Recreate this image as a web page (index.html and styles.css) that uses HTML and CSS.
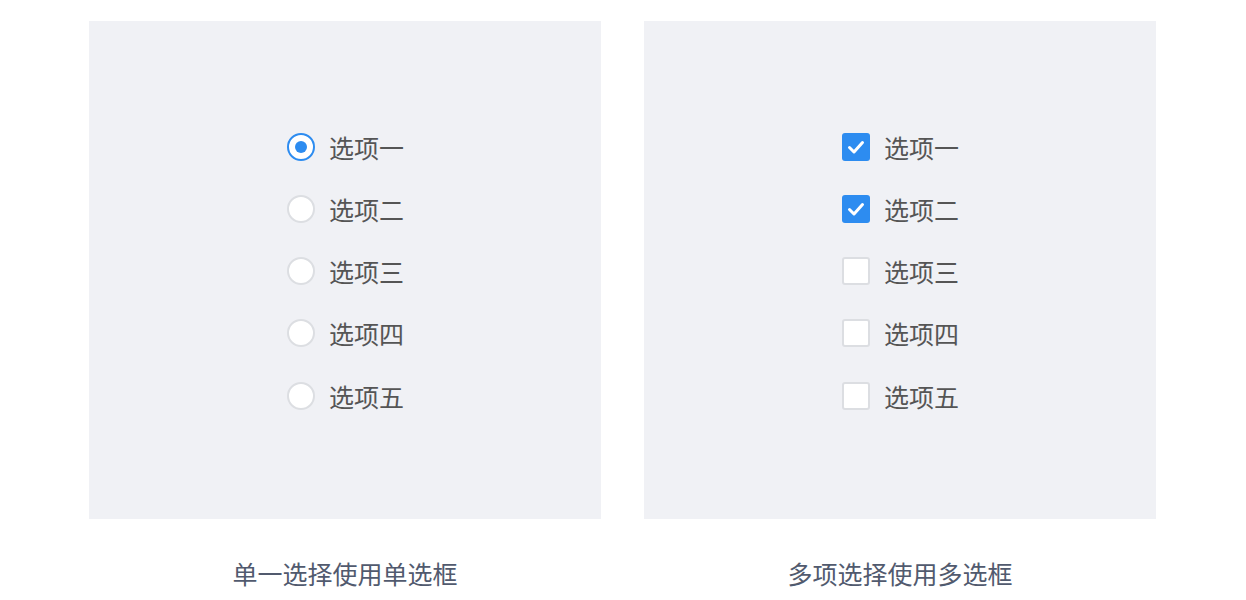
FILE: index.html
```html
<!DOCTYPE html>
<html lang="zh">
<head>
<meta charset="utf-8">
<link rel="stylesheet" href="styles.css">
</head>
<body>
<div class="page">
  <div class="col">
    <div class="panel">
      <div class="list">
        <div class="row"><span class="radio checked"></span><span class="label">选项一</span></div>
        <div class="row"><span class="radio"></span><span class="label">选项二</span></div>
        <div class="row"><span class="radio"></span><span class="label">选项三</span></div>
        <div class="row"><span class="radio"></span><span class="label">选项四</span></div>
        <div class="row"><span class="radio"></span><span class="label">选项五</span></div>
      </div>
    </div>
    <div class="caption">单一选择使用单选框</div>
  </div>
  <div class="col">
    <div class="panel">
      <div class="list">
        <div class="row"><span class="check checked"><svg viewBox="0 0 28 28" width="28" height="28"><path d="M7.5 14.5 L12 19 L20.5 9.5" fill="none" stroke="#fff" stroke-width="3" stroke-linecap="round" stroke-linejoin="round"/></svg></span><span class="label">选项一</span></div>
        <div class="row"><span class="check checked"><svg viewBox="0 0 28 28" width="28" height="28"><path d="M7.5 14.5 L12 19 L20.5 9.5" fill="none" stroke="#fff" stroke-width="3" stroke-linecap="round" stroke-linejoin="round"/></svg></span><span class="label">选项二</span></div>
        <div class="row"><span class="check"></span><span class="label">选项三</span></div>
        <div class="row"><span class="check"></span><span class="label">选项四</span></div>
        <div class="row"><span class="check"></span><span class="label">选项五</span></div>
      </div>
    </div>
    <div class="caption">多项选择使用多选框</div>
  </div>
</div>
</body>
</html>
```

FILE: styles.css
```css
html, body {
  margin: 0;
  padding: 0;
  background: #fff;
}
body {
  font-family: "Noto Sans CJK SC", "Noto Sans", sans-serif;
}
.page {
  display: flex;
  gap: 43px;
  padding: 21px 0 0 89px;
}
.col {
  width: 512px;
  display: flex;
  flex-direction: column;
  align-items: center;
}
.panel {
  width: 512px;
  height: 498px;
  background: #f0f1f5;
  display: flex;
  align-items: center;
  justify-content: center;
}
.list {
  display: flex;
  flex-direction: column;
  gap: 34.25px;
  padding: 2px 1px 0 2px;
}
.row {
  display: flex;
  align-items: center;
  height: 28px;
}
.label {
  font-size: 25px;
  line-height: 28px;
  color: #555;
  margin-left: 14px;
}
.radio {
  box-sizing: border-box;
  width: 28px;
  height: 28px;
  border-radius: 50%;
  background: #fff;
  border: 2px solid #dcdee2;
  display: flex;
  align-items: center;
  justify-content: center;
}
.radio.checked {
  border-color: #2d8cf0;
}
.radio.checked::after {
  content: "";
  width: 12px;
  height: 12px;
  border-radius: 50%;
  background: #2d8cf0;
}
.check {
  box-sizing: border-box;
  width: 28px;
  height: 28px;
  border-radius: 3px;
  background: #fff;
  border: 2px solid #dcdee2;
  display: flex;
}
.check.checked {
  background: #2d8cf0;
  border: none;
}
.caption {
  margin-top: 39px;
  font-size: 25px;
  line-height: 30px;
  color: #515a6e;
}
```
